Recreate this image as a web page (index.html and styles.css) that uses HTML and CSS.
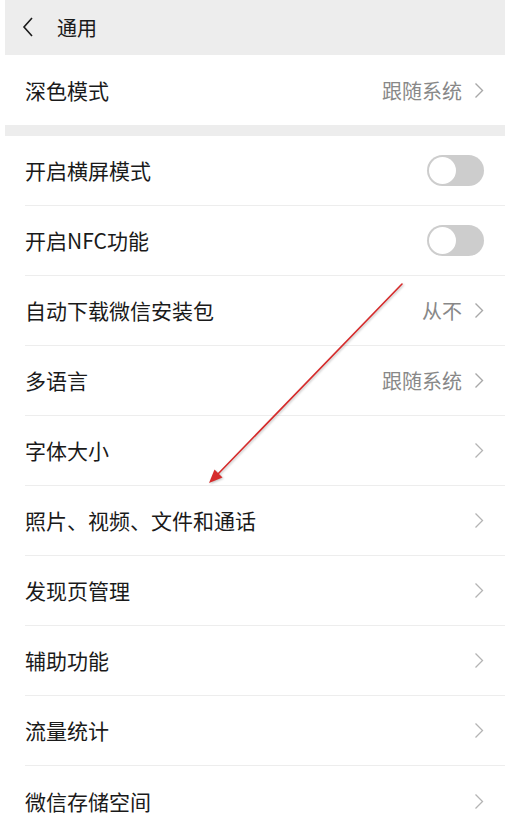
FILE: index.html
```html
<!DOCTYPE html>
<html lang="zh-CN">
<head>
    <meta charset="UTF-8">
    <meta name="viewport" content="width=device-width, initial-scale=1.0">
    <title>通用</title>
    <link rel="stylesheet" href="styles.css">
</head>
<body>
    <div class="page">
        <div class="nav-bar">
            <svg class="back-icon" width="12" height="20" viewBox="0 0 12 20">
                <path d="M10 1 L2 10 L10 19" fill="none" stroke="#1a1a1a" stroke-width="1.6"/>
            </svg>
            <span class="nav-title">通用</span>
        </div>

        <div class="group">
            <div class="cell">
                <div class="cell-body">
                    <span class="cell-title">深色模式</span>
                    <span class="cell-value">跟随系统</span>
                    <svg class="arrow" width="10" height="17" viewBox="0 0 10 17"><path d="M1.5 1.5 L8.5 8.5 L1.5 15.5" fill="none" stroke="#a8a8a8" stroke-width="1.4"/></svg>
                </div>
            </div>
        </div>

        <div class="group">
            <div class="cell">
                <div class="cell-body">
                    <span class="cell-title">开启横屏模式</span>
                    <span class="switch"><span class="switch-knob"></span></span>
                </div>
            </div>
            <div class="cell">
                <div class="cell-body">
                    <span class="cell-title">开启NFC功能</span>
                    <span class="switch"><span class="switch-knob"></span></span>
                </div>
            </div>
            <div class="cell">
                <div class="cell-body">
                    <span class="cell-title">自动下载微信安装包</span>
                    <span class="cell-value">从不</span>
                    <svg class="arrow" width="10" height="17" viewBox="0 0 10 17"><path d="M1.5 1.5 L8.5 8.5 L1.5 15.5" fill="none" stroke="#a8a8a8" stroke-width="1.4"/></svg>
                </div>
            </div>
            <div class="cell">
                <div class="cell-body">
                    <span class="cell-title">多语言</span>
                    <span class="cell-value">跟随系统</span>
                    <svg class="arrow" width="10" height="17" viewBox="0 0 10 17"><path d="M1.5 1.5 L8.5 8.5 L1.5 15.5" fill="none" stroke="#a8a8a8" stroke-width="1.4"/></svg>
                </div>
            </div>
            <div class="cell">
                <div class="cell-body">
                    <span class="cell-title">字体大小</span>
                    <svg class="arrow" width="10" height="17" viewBox="0 0 10 17"><path d="M1.5 1.5 L8.5 8.5 L1.5 15.5" fill="none" stroke="#b4b4b4" stroke-width="1.3"/></svg>
                </div>
            </div>
            <div class="cell">
                <div class="cell-body">
                    <span class="cell-title">照片、视频、文件和通话</span>
                    <svg class="arrow" width="10" height="17" viewBox="0 0 10 17"><path d="M1.5 1.5 L8.5 8.5 L1.5 15.5" fill="none" stroke="#b4b4b4" stroke-width="1.3"/></svg>
                </div>
            </div>
            <div class="cell">
                <div class="cell-body">
                    <span class="cell-title">发现页管理</span>
                    <svg class="arrow" width="10" height="17" viewBox="0 0 10 17"><path d="M1.5 1.5 L8.5 8.5 L1.5 15.5" fill="none" stroke="#b4b4b4" stroke-width="1.3"/></svg>
                </div>
            </div>
            <div class="cell">
                <div class="cell-body">
                    <span class="cell-title">辅助功能</span>
                    <svg class="arrow" width="10" height="17" viewBox="0 0 10 17"><path d="M1.5 1.5 L8.5 8.5 L1.5 15.5" fill="none" stroke="#b4b4b4" stroke-width="1.3"/></svg>
                </div>
            </div>
            <div class="cell">
                <div class="cell-body">
                    <span class="cell-title">流量统计</span>
                    <svg class="arrow" width="10" height="17" viewBox="0 0 10 17"><path d="M1.5 1.5 L8.5 8.5 L1.5 15.5" fill="none" stroke="#b4b4b4" stroke-width="1.3"/></svg>
                </div>
            </div>
            <div class="cell">
                <div class="cell-body">
                    <span class="cell-title">微信存储空间</span>
                    <svg class="arrow" width="10" height="17" viewBox="0 0 10 17"><path d="M1.5 1.5 L8.5 8.5 L1.5 15.5" fill="none" stroke="#b4b4b4" stroke-width="1.3"/></svg>
                </div>
            </div>
        </div>

        <!-- annotation arrow drawn over the list -->
        <svg class="annotation" width="500" height="816" viewBox="0 0 500 816">
            <line x1="397" y1="284" x2="213" y2="474" stroke="#d62b2b" stroke-width="1.6" stroke-linecap="round"/>
            <polygon points="204,483 209.5,469.6 217.5,477.4" fill="#d62b2b"/>
        </svg>
    </div>
</body>
</html>
```

FILE: styles.css
```css
/* Settings page */
body {
    margin: 0;
    background: #fff;
    font-family: "Noto Sans CJK SC", "Noto Sans", sans-serif;
    color: #1a1a1a;
    overflow: hidden;
}

.page {
    position: relative;
    width: 500px;
    height: 816px;
    margin-left: 5px;
    background: #ededed;
    overflow: hidden;
}

.nav-bar {
    height: 54px;
    display: flex;
    align-items: center;
    padding-left: 17px;
    background: #ededed;
}

.back-icon {
    margin-right: 23px;
}

.nav-title {
    font-size: 20px;
    font-weight: 400;
}

.group {
    background: #fff;
    margin-bottom: 11px;
}

.nav-bar + .group {
    margin-top: 1px;
}

.cell {
    padding-left: 20px;
}

.cell-body {
    height: 69px;
    display: flex;
    align-items: center;
    padding-right: 21px;
    border-bottom: 1px solid #ededed;
}

.group .cell:last-child .cell-body {
    border-bottom: none;
    height: 70px;
}

.cell-title {
    flex: 1;
    font-size: 21px;
    line-height: 1;
}

.cell-value {
    font-size: 20px;
    color: #888;
    margin-right: 12px;
}

.arrow {
    display: block;
}

/* Switch (off state) */
.switch {
    width: 57px;
    height: 31px;
    border-radius: 16px;
    background: #cdcdcd;
    display: flex;
    align-items: center;
    padding: 0 2px;
    box-sizing: border-box;
}

.switch-knob {
    width: 27px;
    height: 27px;
    border-radius: 50%;
    background: #fff;
}

.annotation {
    position: absolute;
    left: 0;
    top: 0;
    filter: drop-shadow(1px 1px 1px rgba(0, 0, 0, 0.25));
}
```
